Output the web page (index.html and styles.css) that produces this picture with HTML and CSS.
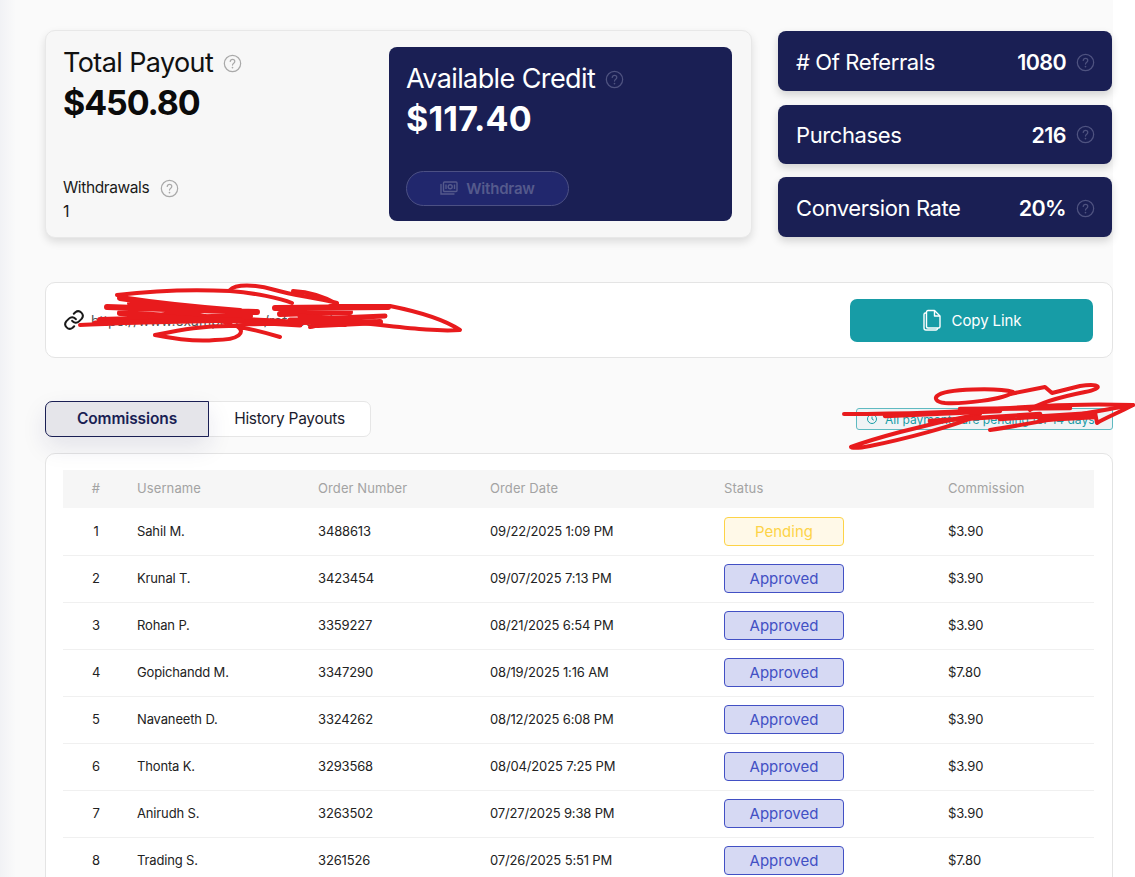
FILE: index.html
```html
<!DOCTYPE html>
<html lang="en">
<head>
    <meta charset="UTF-8">
    <meta name="viewport" content="width=device-width, initial-scale=1.0">
    <title>Referrals</title>
    <link rel="stylesheet" href="styles.css">
</head>
<body>
<svg class="icon-defs" width="0" height="0">
    <symbol id="help" viewBox="0 0 20 20">
        <circle cx="10" cy="10" r="8.6" fill="none" stroke="currentColor" stroke-width="1.3"/>
        <path d="M7.6 7.9c0-1.4 1.1-2.3 2.4-2.3s2.4.9 2.4 2.2c0 1.9-2.4 1.9-2.4 3.9" fill="none" stroke="currentColor" stroke-width="1.3" stroke-linecap="round"/>
        <circle cx="10" cy="14.3" r=".9" fill="currentColor"/>
    </symbol>
</svg>

<div class="page">

    <!-- Stats -->
    <div class="stats">
        <div class="payout-card">
            <div class="payout-left">
                <div>
                    <div class="stat-title">Total Payout <svg class="help help-lg"><use href="#help"/></svg></div>
                    <div class="stat-value">$450.80</div>
                </div>
                <div>
                    <div class="withdrawals">Withdrawals <svg class="help help-md"><use href="#help"/></svg></div>
                    <div class="withdrawals-count">1</div>
                </div>
            </div>
            <div class="credit-card">
                <div>
                    <div class="stat-title">Available Credit <svg class="help help-lg"><use href="#help"/></svg></div>
                    <div class="stat-value">$117.40</div>
                </div>
                <button class="withdraw-btn">
                    <svg width="18" height="15" viewBox="0 0 18 15" fill="none" stroke="currentColor" stroke-width="1.4">
                        <rect x="3.5" y="1" width="13.5" height="9.5" rx="1"/>
                        <circle cx="10.2" cy="5.7" r="2"/>
                        <path d="M6 3.5v4.5M14.5 3.5v4.5"/>
                        <path d="M1 3.5v9.5h13" stroke-linecap="round"/>
                    </svg>
                    Withdraw
                </button>
            </div>
        </div>
        <div class="side-stats">
            <div class="side-stat"><span class="side-label">#&nbsp;Of Referrals</span><span class="side-value">1080</span><svg class="help help-md"><use href="#help"/></svg></div>
            <div class="side-stat"><span class="side-label">Purchases</span><span class="side-value">216</span><svg class="help help-md"><use href="#help"/></svg></div>
            <div class="side-stat"><span class="side-label">Conversion Rate</span><span class="side-value">20%</span><svg class="help help-md"><use href="#help"/></svg></div>
        </div>
    </div>

    <!-- Referral link -->
    <div class="link-card">
        <div class="link-url">
            <svg width="22" height="22" viewBox="0 0 24 24" fill="none" stroke="#1a1a1a" stroke-width="2.2" stroke-linecap="round" stroke-linejoin="round">
                <path d="M10 13a5 5 0 0 0 7.5.5l3-3a5 5 0 0 0-7-7l-1.7 1.7"/>
                <path d="M14 11a5 5 0 0 0-7.5-.5l-3 3a5 5 0 0 0 7 7l1.7-1.7"/>
            </svg>
            <span>https://www.example.com/referral/share</span>
        </div>
        <button class="copy-btn">
            <svg width="20" height="22" viewBox="0 0 20 22" fill="none" stroke="currentColor" stroke-width="1.4" stroke-linejoin="round">
                <path d="M6 1.500h6.500L18 7v10.500a1.500 1.500 0 0 1-1.500 1.500H6a1.500 1.500 0 0 1-1.500-1.500V3A1.500 1.500 0 0 1 6 1.500z"/>
                <path d="M12.500 1.500V7H18"/>
                <path d="M4.500 4H3.500A1.500 1.500 0 0 0 2 5.500V19a2 2 0 0 0 2 2h10a1.500 1.500 0 0 0 1.500-1.500V19"/>
            </svg>
            Copy Link
        </button>
    </div>

    <!-- Tabs -->
    <div class="tabs-row">
        <div class="tabs">
            <div class="tab tab-active">Commissions</div>
            <div class="tab">History Payouts</div>
        </div>
        <div class="notice">
            <svg width="12" height="12" viewBox="0 0 12 12" fill="none" stroke="currentColor" stroke-width="1">
                <circle cx="6" cy="6" r="4.500"/>
                <path d="M6 3.500V6l1.800 1.200"/>
            </svg>
            <span>All payments are pending for 14 days</span>
        </div>
    </div>

    <!-- Table -->
    <div class="table-card">
        <table class="commissions">
            <colgroup>
                <col class="col-num"><col class="col-user"><col class="col-order"><col class="col-date"><col class="col-status"><col class="col-amount">
            </colgroup>
            <thead>
                <tr><th class="num">#</th><th>Username</th><th>Order Number</th><th>Order Date</th><th>Status</th><th>Commission</th></tr>
            </thead>
            <tbody>
                <tr><td class="num">1</td><td>Sahil M.</td><td>3488613</td><td>09/22/2025 1:09 PM</td><td class="status"><span class="badge badge-pending">Pending</span></td><td>$3.90</td></tr>
                <tr><td class="num">2</td><td>Krunal T.</td><td>3423454</td><td>09/07/2025 7:13 PM</td><td class="status"><span class="badge badge-approved">Approved</span></td><td>$3.90</td></tr>
                <tr><td class="num">3</td><td>Rohan P.</td><td>3359227</td><td>08/21/2025 6:54 PM</td><td class="status"><span class="badge badge-approved">Approved</span></td><td>$3.90</td></tr>
                <tr><td class="num">4</td><td>Gopichandd M.</td><td>3347290</td><td>08/19/2025 1:16 AM</td><td class="status"><span class="badge badge-approved">Approved</span></td><td>$7.80</td></tr>
                <tr><td class="num">5</td><td>Navaneeth D.</td><td>3324262</td><td>08/12/2025 6:08 PM</td><td class="status"><span class="badge badge-approved">Approved</span></td><td>$3.90</td></tr>
                <tr><td class="num">6</td><td>Thonta K.</td><td>3293568</td><td>08/04/2025 7:25 PM</td><td class="status"><span class="badge badge-approved">Approved</span></td><td>$3.90</td></tr>
                <tr><td class="num">7</td><td>Anirudh S.</td><td>3263502</td><td>07/27/2025 9:38 PM</td><td class="status"><span class="badge badge-approved">Approved</span></td><td>$3.90</td></tr>
                <tr><td class="num">8</td><td>Trading S.</td><td>3261526</td><td>07/26/2025 5:51 PM</td><td class="status"><span class="badge badge-approved">Approved</span></td><td>$7.80</td></tr>
            </tbody>
        </table>
    </div>

    <!-- Red marker scribbles over the private bits -->
    <svg class="scribble" width="1135" height="877" viewBox="0 0 1135 877" fill="none" stroke="#e81b1d" stroke-width="4" stroke-linecap="round" stroke-linejoin="round">
        <path d="M117 295C150 291 190 289 230 291C255 293 280 298 292 303"/>
        <path d="M230 290C235 284 255 284 275 290C295 296 315 297 337 303M293 291C310 292 325 297 337 304"/>
        <path d="M330 306L390 306C420 312 445 320 460 330C430 332 395 326 350 322C335 321 320 325 310 327"/>
        <path d="M155 335C180 330 205 325 237 326C246 332 240 340 215 340C195 342 170 338 155 335M240 327C255 330 270 334 280 337"/>
        <path d="M80 325C110 324 140 322 200 319C240 317 300 322 345 325"/>
        <path d="M107 307L257 312M120 298C160 304 200 308 240 311M100 320L250 316M120 313L270 322M130 303L230 322M275 308L388 307M280 314L350 312M318 325L380 322" stroke-width="6"/>
        <path d="M95 323L240 320M150 316L300 325M290 320L385 316M300 316L375 322M240 324L360 321" stroke-width="5"/>
        <path d="M844 414C900 414 960 412 1010 408C1060 404 1100 404 1133 405C1120 412 1105 418 1097 423L1095 412"/>
        <path d="M851 447C870 440 920 425 980 414C960 425 900 440 870 446C860 448 852 449 851 447"/>
        <path d="M937 396C945 388 1000 388 1013 392C1005 400 960 404 945 403C935 402 935 398 937 396"/>
        <path d="M1010 394L1045 387L1052 393L1080 386C1100 383 1105 388 1085 392C1065 396 1040 402 1030 410"/>
        <path d="M990 430C1030 424 1090 412 1133 405"/>
        <path d="M885 416L1000 411M930 421L1040 414M1000 419L1095 413M960 409L1070 408M1040 420L1095 417" stroke-width="4.500"/>
    </svg>
</div>
</body>
</html>
```

FILE: styles.css
```css
* {
    box-sizing: border-box;
}

html, body {
    height: 877px;
    margin: 0;
    overflow: hidden;
}

body {
    font-family: 'Inter', 'Liberation Sans', sans-serif;
    background-color: #ffffff;
    color: #1a1a1a;
}

.icon-defs {
    position: absolute;
}

.page {
    position: relative;
    width: 1113px;
    height: 877px;
    padding: 30px 0 0 45px;
    background: linear-gradient(to right, #f1f2f5 0, #fafafa 16px);
}

/* Stats */
.stats {
    display: flex;
    gap: 26px;
}

.payout-card {
    display: flex;
    justify-content: space-between;
    width: 707px;
    height: 208px;
    padding: 16px 19px 15px 17px;
    background-color: #f7f7f7;
    border: 1px solid #e8e8e8;
    border-radius: 10px;
    box-shadow: 0 4px 8px rgba(0, 0, 0, 0.12);
}

.payout-left {
    display: flex;
    flex-direction: column;
    justify-content: space-between;
    padding-top: 1px;
}

.stat-title {
    display: flex;
    align-items: center;
    font-size: 27px;
    line-height: 30px;
    letter-spacing: -0.6px;
    color: #111111;
}

.stat-value {
    margin-top: 3px;
    font-size: 34px;
    line-height: 44px;
    font-weight: 700;
    letter-spacing: -1.1px;
    color: #0b0b0b;
}

.help {
    flex: none;
    color: #a9a9a9;
}

.help-lg {
    width: 19px;
    height: 19px;
    margin-left: 10px;
}

.help-md {
    width: 19px;
    height: 19px;
}

.withdrawals {
    display: flex;
    align-items: center;
    gap: 11px;
    font-size: 15.5px;
    line-height: 22px;
    letter-spacing: -0.4px;
}

.withdrawals-count {
    margin-top: 1px;
    font-size: 16px;
    line-height: 22px;
}

.credit-card {
    display: flex;
    flex-direction: column;
    justify-content: space-between;
    width: 343px;
    height: 174px;
    padding: 17px 18px 15px 17px;
    background-color: #1a1f54;
    border-radius: 8px;
}

.credit-card .stat-title,
.credit-card .stat-value {
    color: #ffffff;
}

.credit-card .stat-value {
    letter-spacing: 0.2px;
}

.credit-card .help,
.side-stat .help {
    color: #4f5380;
}

.withdraw-btn {
    display: flex;
    align-items: center;
    justify-content: center;
    gap: 8px;
    width: 163px;
    height: 35px;
    font-family: inherit;
    font-size: 15px;
    font-weight: 600;
    letter-spacing: -0.2px;
    color: #555a8c;
    background-color: #21276d;
    border: 1px solid #4c5084;
    border-radius: 18px;
}

.side-stats {
    display: flex;
    flex-direction: column;
    gap: 14px;
    width: 334px;
    padding-top: 1px;
}

.side-stat {
    display: flex;
    align-items: center;
    height: 60px;
    padding: 2px 17px 0 18px;
    color: #ffffff;
    background-color: #1a1f54;
    border-radius: 8px;
    box-shadow: 0 4px 8px rgba(0, 0, 0, 0.16);
}

.side-stats .side-stat:nth-child(2) {
    height: 59px;
    padding-top: 0;
}

.side-stats .side-stat:nth-child(3) {
    height: 60px;
    margin-top: -1px;
}

.side-label {
    flex: 1;
    font-size: 22px;
    letter-spacing: -0.4px;
}

.side-value {
    margin-right: 10px;
    font-size: 21.5px;
    font-weight: 600;
    letter-spacing: -0.6px;
}

/* Referral link */
.link-card {
    display: flex;
    align-items: center;
    justify-content: space-between;
    height: 76px;
    margin-top: 44px;
    padding: 0 19px 0 17px;
    background-color: #ffffff;
    border: 1px solid #e4e4e4;
    border-radius: 10px;
}

.link-url {
    display: flex;
    align-items: center;
    gap: 6px;
    font-size: 14px;
    color: #555555;
}

.copy-btn {
    display: flex;
    align-items: center;
    justify-content: center;
    gap: 10px;
    width: 243px;
    height: 43px;
    font-family: inherit;
    font-size: 15px;
    letter-spacing: -0.1px;
    color: #ffffff;
    background-color: #179ca6;
    border: none;
    border-radius: 7px;
}

/* Tabs */
.tabs-row {
    display: flex;
    align-items: center;
    justify-content: space-between;
    margin-top: 43px;
}

.tabs {
    display: flex;
    width: 326px;
    height: 36px;
    background-color: #ffffff;
    border: 1px solid #e6e6e6;
    border-radius: 7px;
}

.tab {
    display: flex;
    align-items: center;
    justify-content: center;
    flex: 1;
    padding-bottom: 1px;
    font-size: 15.5px;
    letter-spacing: -0.3px;
    color: #1c1c2e;
}

.tab-active {
    margin: -1px 0 -1px -1px;
    flex: none;
    width: 164px;
    font-weight: 600;
    letter-spacing: -0.1px;
    color: #1a1f54;
    background-color: #e5e5ea;
    border: 1px solid #1a1f54;
    border-radius: 7px 0 0 7px;
    box-shadow: 0 10px 24px rgba(26, 31, 84, 0.1);
}

.notice {
    display: flex;
    align-items: center;
    gap: 7px;
    width: 257px;
    height: 22px;
    padding-left: 9px;
    font-size: 12px;
    white-space: nowrap;
    overflow: hidden;
    color: #179ca6;
    background-color: #f0f3f5;
    border: 1px solid #5fbac1;
    border-radius: 3px;
}

/* Table */
.table-card {
    height: 440px;
    margin-top: 16px;
    padding: 16px 18px 0 17px;
    background-color: #ffffff;
    border: 1px solid #e4e4e4;
    border-radius: 10px;
}

.commissions {
    width: 1031px;
    table-layout: fixed;
    border-collapse: collapse;
}

.col-num { width: 74px; }
.col-user { width: 181px; }
.col-order { width: 172px; }
.col-date { width: 234px; }
.col-status { width: 224px; }
.col-amount { width: 146px; }

.commissions th {
    height: 38px;
    padding: 0 0 2px 0;
    font-size: 13px;
    font-weight: 400;
    letter-spacing: 0.1px;
    text-align: left;
    color: #a3a3a3;
    background-color: #f6f6f6;
}

.commissions td {
    height: 47px;
    padding: 0 0 2px 0;
    font-size: 13px;
    letter-spacing: -0.15px;
    color: #222222;
    border-bottom: 1px solid #f0f0f0;
}

.commissions tr:first-child td {
    padding-bottom: 0;
}

.commissions td.status {
    padding-bottom: 0;
}

.commissions .num {
    padding-right: 8px;
    text-align: center;
}

.badge {
    display: flex;
    align-items: center;
    justify-content: center;
    width: 120px;
    height: 29px;
    font-size: 15px;
    border-radius: 4px;
    letter-spacing: 0;
}

.badge-pending {
    color: #fdd347;
    background-color: #fff9e8;
    border: 1px solid #fdd347;
}

.badge-approved {
    color: #4250c4;
    background-color: #d6d9f3;
    border: 1px solid #4250c4;
}

/* Scribbles */
.scribble {
    position: absolute;
    top: 0;
    left: 0;
    pointer-events: none;
}
```
